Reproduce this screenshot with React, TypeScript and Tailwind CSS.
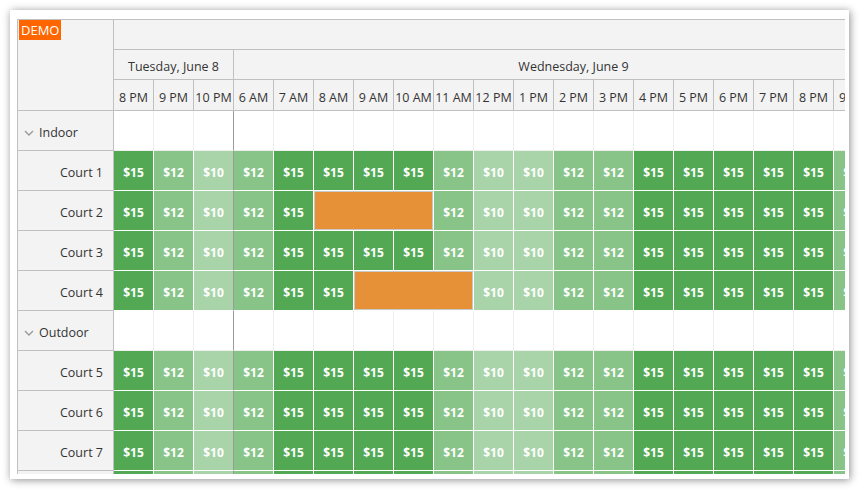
import { Fragment } from "react";

type Row =
  | { kind: "group"; name: string }
  | { kind: "court"; name: string; event?: { start: number; span: number } };

const HOURS = [
  "8 PM", "9 PM", "10 PM",
  "6 AM", "7 AM", "8 AM", "9 AM", "10 AM", "11 AM", "12 PM", "1 PM", "2 PM",
  "3 PM", "4 PM", "5 PM", "6 PM", "7 PM", "8 PM", "9 PM", "10 PM",
];

const PRICES = [15, 12, 10, 12, 15, 15, 15, 15, 12, 10, 10, 12, 12, 15, 15, 15, 15, 15, 12, 10];

// last column of the first day gets the darker separator
const DAY_END = 2;

const DAYS = [
  { label: "Tuesday, June 8", width: "w-[120px]" },
  { label: "Wednesday, June 9", width: "w-[680px]" },
];

const ROWS: Row[] = [
  { kind: "group", name: "Indoor" },
  { kind: "court", name: "Court 1" },
  { kind: "court", name: "Court 2", event: { start: 5, span: 3 } },
  { kind: "court", name: "Court 3" },
  { kind: "court", name: "Court 4", event: { start: 6, span: 3 } },
  { kind: "group", name: "Outdoor" },
  { kind: "court", name: "Court 5" },
  { kind: "court", name: "Court 6" },
  { kind: "court", name: "Court 7" },
  { kind: "court", name: "Court 8" },
];

const priceColor = (p: number) =>
  p === 15 ? "bg-[#53a953]" : p === 12 ? "bg-[#88c488]" : "bg-[#a9d4a9]";

const Chevron = () => (
  <svg width="10" height="6" viewBox="0 0 10 6" className="shrink-0">
    <path d="M1 1 L5 5 L9 1" fill="none" stroke="#9a9a9a" strokeWidth="1.4" />
  </svg>
);

function RowHeader({ row }: { row: Row }) {
  if (row.kind === "group") {
    return (
      <div className="w-[96px] h-full shrink-0 border-r border-b border-[#c0c0c0] bg-[#f3f3f3] flex items-center gap-[5px] pl-[6px] pt-[5px] text-[#333]">
        <Chevron />
        <span>{row.name}</span>
      </div>
    );
  }
  return (
    <div className="w-[96px] h-full shrink-0 border-r border-b border-[#c0c0c0] bg-[#f3f3f3] flex items-center justify-end pr-[10px] pt-[5px] text-[#333]">
      {row.name}
    </div>
  );
}

function CourtCells({ event }: { event?: { start: number; span: number } }) {
  const cells = [];
  for (let i = 0; i < HOURS.length; i++) {
    const sep = i === DAY_END ? "border-r-[#9a9a9a]" : "border-r-white";
    if (event && i === event.start) {
      cells.push(
        <div key={i} className="w-[120px] h-full shrink-0 border-r border-b border-white">
          <div className="w-full h-full border border-[#c8c8c8] bg-[#e69138]" />
        </div>
      );
      i += event.span - 1;
      continue;
    }
    cells.push(
      <div
        key={i}
        className={`w-[40px] h-full shrink-0 border-r border-b border-b-white ${sep} ${priceColor(PRICES[i])} flex items-center justify-center pt-[4px] text-white font-bold text-[12px]`}
      >
        ${PRICES[i]}
      </div>
    );
  }
  return <>{cells}</>;
}

function GroupCells() {
  return (
    <>
      {HOURS.map((_, i) => (
        <div
          key={i}
          className={`w-[40px] h-full shrink-0 border-r border-b border-b-[#eeeeee] bg-white ${
            i === DAY_END ? "border-r-[#9a9a9a]" : "border-r-[#eeeeee]"
          }`}
        />
      ))}
    </>
  );
}

export default function App() {
  return (
    <div
      className="w-[860px] h-[490px] bg-white pt-[10px] pl-[10px] text-[12.5px]"
      style={{ fontFamily: '"Open Sans", "Noto Sans", sans-serif' }}
    >
      <div className="w-[839px] h-[469px] bg-white shadow-[1px_1px_8px_rgba(0,0,0,0.45)] pt-[9px] pl-[7px]">
        <div className="w-[828px] h-[455px] overflow-hidden border-l border-t border-[#c0c0c0] flex flex-col">
          {/* header */}
          <div className="flex h-[91px] shrink-0">
            <div className="relative w-[96px] h-full shrink-0 border-r border-b border-[#c0c0c0] bg-[#f3f3f3]">
              <div className="absolute left-[1px] top-0 h-[20px] px-[2px] bg-[#ff6600] text-white text-[13px] leading-[21px]">
                DEMO
              </div>
            </div>
            <div className="flex flex-col bg-[#f3f3f3] text-[#333]">
              <div className="h-[30px] w-[800px] border-b border-[#c0c0c0]" />
              <div className="h-[30px] flex">
                {DAYS.map((d) => (
                  <div
                    key={d.label}
                    className={`${d.width} shrink-0 h-full border-r border-b border-[#c0c0c0] flex items-center justify-center pt-[6px]`}
                  >
                    {d.label}
                  </div>
                ))}
              </div>
              <div className="h-[31px] flex">
                {HOURS.map((h, i) => (
                  <div
                    key={i}
                    className="w-[40px] shrink-0 h-full border-r border-b border-[#c0c0c0] flex items-center justify-center whitespace-nowrap pt-[6px]"
                  >
                    {h}
                  </div>
                ))}
              </div>
            </div>
          </div>

          {/* rows */}
          {ROWS.map((row) => (
            <Fragment key={row.name}>
              <div className="flex h-[40px] shrink-0">
                <RowHeader row={row} />
                {row.kind === "group" ? <GroupCells /> : <CourtCells event={row.event} />}
              </div>
            </Fragment>
          ))}
        </div>
      </div>
    </div>
  );
}
